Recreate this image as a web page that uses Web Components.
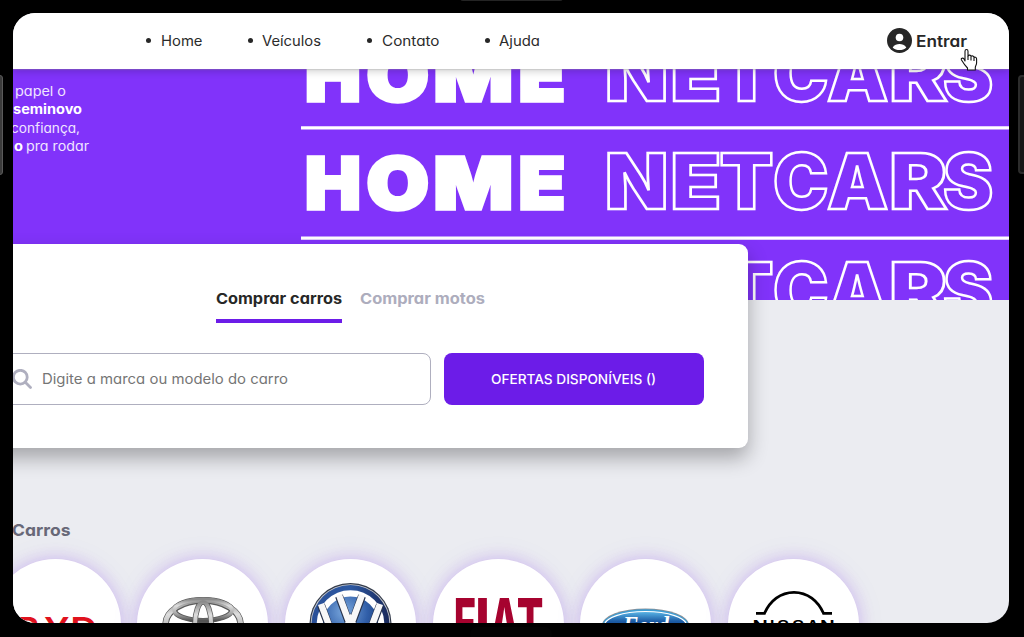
<!DOCTYPE html>
<html lang="pt-BR">
<head>
<meta charset="utf-8">
<title>Netcars</title>
<style>
html,body{margin:0;height:100%;background:#000;overflow:hidden}
body{font-family:Inter,"Open Sans",sans-serif;font-feature-settings:"cv11";color:#272727}
</style>
</head>
<body>
<device-frame>
  <net-header>
    <nav-item><fit-text w="41.5">Home</fit-text></nav-item><nav-item><fit-text w="59">Veículos</fit-text></nav-item><nav-item><fit-text w="57.5">Contato</fit-text></nav-item><nav-item><fit-text w="41">Ajuda</fit-text></nav-item>
    <login-link slot="login"><fit-text w="51">Entrar</fit-text></login-link>
  </net-header>
  <hero-banner></hero-banner>
  <search-card></search-card>
  <brand-list></brand-list>
  <hand-cursor slot="overlay"></hand-cursor>
</device-frame>
<script>
const define=(name,html,after)=>{
  const t=document.createElement('template');t.innerHTML=html;
  customElements.define(name,class extends HTMLElement{
    connectedCallback(){
      if(this.shadowRoot)return;
      this.attachShadow({mode:'open'}).append(t.content.cloneNode(true));
      if(after)after.call(this,this.shadowRoot);
    }
  });
};

/* Fills an svg <text> with letters, each stretched between two x positions. */
const ctx=document.createElement('canvas').getContext('2d');
function setLetters(el,weight,family){
  const size=+el.getAttribute('font-size');
  ctx.font=`${weight} ${size}px ${family}`;
  el.setAttribute('font-weight',weight);el.setAttribute('font-family',family);
  const word=el.dataset.word,spans=el.dataset.x.split(' ').map(p=>p.split(',').map(Number));
  [...word].forEach((c,i)=>{
    const m=ctx.measureText(c),ink=m.actualBoundingBoxRight+m.actualBoundingBoxLeft;
    const k=(spans[i][1]-spans[i][0])/ink;
    const t=document.createElementNS('http://www.w3.org/2000/svg','tspan');
    t.textContent=c;
    t.setAttribute('x',spans[i][0]+m.actualBoundingBoxLeft*k);
    t.setAttribute('textLength',m.width*k);
    t.setAttribute('lengthAdjust','spacingAndGlyphs');
    el.append(t);
  });
}

define('device-frame',`<style>
:host{display:block;box-sizing:border-box;width:1024px;height:637px;padding:13px 15px 15px 13px;background:#000;position:relative;overflow:hidden}
main{height:609.5px;border-radius:22px;overflow:hidden;background:#ebecf1;display:flex;flex-direction:column;isolation:isolate}
i{position:absolute;box-sizing:border-box}
.l{left:-4px;top:75px;width:7px;height:100px;border-radius:3px;background:#3b3b3b;border:1px solid #5a5a5a}
.r{left:1018px;top:75px;width:12px;height:99px;border-radius:4px;background:#161616;border:2px solid #2c2c2c}
.t{left:460px;top:-5px;width:103px;height:6px;border-radius:4px;background:#242424}
.b{left:470px;top:627px;width:82px;height:14px;border-radius:8px;background:#030303}
</style><i class="l"></i><i class="r"></i><i class="t"></i><i class="b"></i><main><slot></slot></main><slot name="overlay"></slot>`);

define('net-header',`<style>
:host{display:flex;align-items:center;justify-content:space-between;box-sizing:border-box;height:55.500px;flex:none;padding:0 42px 0 133.300px;background:#fff;box-shadow:0 1px 1px #9994,0 2px 8px #0003;position:relative;z-index:2}
nav{display:flex;gap:45.700px}
</style><nav><slot></slot></nav><slot name="login"></slot>`);

define('nav-item',`<style>
:host{display:flex;align-items:center;gap:9.500px;font-size:14px;line-height:20px;color:#2b2b2b}
i{width:5px;height:5px;border-radius:50%;background:#272727}
</style><i></i><slot></slot>`);

define('login-link',`<style>
:host{display:flex;align-items:center;gap:4.500px;font-size:16px;font-weight:600;line-height:24px;color:#272727}
svg{display:block;width:25px;height:25px;margin-top:-1px}
</style><svg viewBox="0 0 25 25"><circle cx="12.5" cy="12.5" r="12.5" fill="#272727"/><circle cx="12.5" cy="9.500" r="3.800" fill="#fff"/><path d="M5.700 19.400C7.300 17 10 16 12.500 16s5.200 1 6.800 3.400C17.600 21.200 15 22.100 12.500 22.100S7.400 21.200 5.700 19.400Z" fill="#fff"/></svg><slot></slot>`);

define('hero-banner',`<style>
:host{display:grid;grid-template-columns:288px 708px;height:231.800px;flex:none;background:#8133fa;overflow:hidden}
.copy{padding-top:13.500px;font-size:13px;line-height:18.400px;color:#f0e5ff}
p{margin:0;height:18.400px;white-space:pre}
b{font-weight:700;color:#fff}
svg{display:block;width:708px;height:232px}
</style>
<div class="copy"><p style="margin-left:1.500px"><fit-text w="51">papel o</fit-text></p><p style="margin-left:-.5px"><b><fit-text w="69">seminovo</fit-text></b></p><p style="margin-left:-2px"><fit-text w="69">confiança,</fit-text></p><p style="margin-left:.5px"><b><fit-text w="9">o</fit-text></b><fit-text w="3"> </fit-text><fit-text w="63">pra rodar</fit-text></p></div>
<svg viewBox="301 68.500 708 232">
<g fill="#fff" stroke="#fff" stroke-width="3.400">
<text class="h" y="100.200" font-size="71.500" data-word="HOME" data-x="308,358 368.700,426.200 437,509.200 521.700,562.300"></text>
<text class="h" y="208.800" font-size="71.500" data-word="HOME" data-x="308,358 368.700,426.200 437,509.200 521.700,562.300"></text>
</g>
<g fill="#8133fa" stroke="#fff" stroke-width="2.500">
<text class="n" y="100.200" font-size="77" data-word="NETCARS" data-x="608,665 673.500,718 721.500,771.500 775,827 828,887 892.500,947 945,992"></text>
<text class="n" y="208.700" font-size="77" data-word="NETCARS" data-x="608,665 673.500,718 721.500,771.500 775,827 828,887 892.500,947 945,992"></text>
<text class="n" y="317.100" font-size="77" data-word="NETCARS" data-x="608,665 673.500,718 721.500,771.500 775,827 828,887 892.500,947 945,992"></text>
</g>
<path d="M300.500 127.400H1010M300.500 237.700H1010" stroke="#fff" stroke-width="3.300"/>
</svg>`,r=>{
  r.querySelectorAll('.h').forEach(e=>setLetters(e,900,'Inter'));
  r.querySelectorAll('.n').forEach(e=>setLetters(e,900,'Inter'));
});

define('search-card',`<style>
:host{display:block;box-sizing:border-box;width:764.500px;height:204px;flex:none;margin:-56px 0 0 -30px;padding:42px 43px 0 0;background:#fff;border-radius:9px;box-shadow:0 10px 20px #0000004d;position:relative;z-index:1}
.tabs{display:flex;gap:18px;margin-left:233px;font-size:15px;font-weight:700;line-height:25px}
.tabs div{height:33px;color:#adadbd}
.tabs .on{color:#272727;border-bottom:4px solid #6c1ce8}
.row{display:flex;gap:13px;margin-top:29.700px}
.field{box-sizing:border-box;width:447.500px;height:52px;border:1.500px solid #afafbf;border-radius:8px;display:flex;align-items:center;padding-left:27.500px;font-size:14px;color:#757575;gap:10px}
svg{width:20px;height:20px;display:block}
.btn{width:260.500px;height:52px;border-radius:8px;background:#6c1ce8;color:#fff;font-size:13.500px;font-weight:500;display:flex;align-items:center;justify-content:center}
</style>
<div class="tabs"><div class="on"><fit-text w="126">Comprar carros</fit-text></div><div><fit-text w="125">Comprar motos</fit-text></div></div>
<div class="row"><div class="field"><svg viewBox="0 0 20 20" fill="none" stroke="#afafbf" stroke-width="2.800"><circle cx="8.300" cy="8.200" r="6.900"/><path d="m13.300 13.200 5.200 5.200" stroke-linecap="round"/></svg><fit-text w="246">Digite a marca ou modelo do carro</fit-text></div><div class="btn"><fit-text w="165">OFERTAS DISPONÍVEIS ()</fit-text></div></div>`);

define('brand-list',`<style>
:host{display:block;flex:none;padding-top:68.500px}
h2{margin:0 0 0 -1.500px;font-size:16.500px;line-height:26px;font-weight:700;color:#686878}
.row{display:flex;gap:16.700px;margin:16.500px 0 0 -23.500px}
</style><h2><fit-text w="58.500">Carros</fit-text></h2>
<div class="row">
<brand-badge><svg viewBox="0 0 131 131"><text y="81.500" font-size="33" fill="#e0121d" data-word="BYD" data-weight="600" data-x="27,49 54,79 82.500,106.500"></text></svg></brand-badge>
<brand-badge><svg viewBox="0 0 131 131">
<defs><linearGradient id="c" x2="0" y2="1"><stop stop-color="#8b8b8b"/><stop offset=".3" stop-color="#dedede"/><stop offset=".7" stop-color="#a2a2a2"/><stop offset="1" stop-color="#555"/></linearGradient></defs>
<g transform="translate(.6 1)"><g fill="none" stroke="#5b5b5b" stroke-width="6.500"><ellipse cx="65.500" cy="64.500" rx="37.500" ry="24"/><ellipse cx="65.500" cy="50" rx="28.500" ry="10.500" stroke-width="5.200"/><ellipse cx="65.500" cy="64" rx="8" ry="22" stroke-width="5.500"/></g>
<g fill="none" stroke="url(#c)" stroke-width="4.900"><ellipse cx="65.500" cy="64" rx="37.500" ry="24"/><ellipse cx="65.500" cy="50" rx="29" ry="10.500" stroke-width="3.600"/><ellipse cx="65.500" cy="64" rx="8" ry="22" stroke-width="4"/></g></g></svg></brand-badge>
<brand-badge><svg viewBox="0 0 131 131">
<defs><radialGradient id="v" cx=".4" cy=".3" r=".75"><stop stop-color="#7ba9de"/><stop offset=".5" stop-color="#315fa9"/><stop offset="1" stop-color="#102c63"/></radialGradient><linearGradient id="w"><stop stop-color="#294f97"/><stop offset=".5" stop-color="#2e59a2"/><stop offset="1" stop-color="#18285a"/></linearGradient></defs>
<circle cx="65.500" cy="65" r="41" fill="#333b4b"/><circle cx="65.500" cy="65" r="39.800" fill="#c7c9cd"/><circle cx="65.500" cy="65" r="38.900" fill="url(#w)"/>
<circle cx="65.500" cy="65" r="30.700" fill="url(#v)" stroke="#fff" stroke-width="6.200"/>
<path d="m54 37 11.500 31L77 37M36 46l15 40 14.500-24L80 86l15-40" fill="none" stroke="#27334d" stroke-width="8"/>
<path d="m54 36 11.500 31L77 36M36 45l15 40 14.500-24L80 85l15-40" fill="none" stroke="#f7f7f8" stroke-width="6.400"/></svg></brand-badge>
<brand-badge><svg viewBox="0 0 131 131"><text y="87" font-size="66" fill="#a6032f" data-word="FIAT" data-weight="800" data-x="22.500,42 44.500,54.500 57,86 85,109.500"></text></svg></brand-badge>
<brand-badge><svg viewBox="0 0 131 131">
<defs><linearGradient id="f" x2="0" y2="1"><stop stop-color="#5cb8e8"/><stop offset=".35" stop-color="#1c5ca5"/><stop offset="1" stop-color="#0b2c6a"/></linearGradient></defs>
<ellipse cx="65.500" cy="66" rx="43.500" ry="16.600" fill="#8c8f94"/><ellipse cx="65.500" cy="66.500" rx="43" ry="16.300" fill="#3f9ed4"/><ellipse cx="65.500" cy="66.500" rx="41" ry="14" fill="url(#f)" stroke="#fff" stroke-width="1.200"/>
<text x="43" y="75.500" font-size="27" font-family="Liberation Serif" font-style="italic" font-weight="700" fill="#fff" textLength="46" lengthAdjust="spacingAndGlyphs">Ford</text></svg></brand-badge>
<brand-badge><svg viewBox="0 0 131 131">
<path d="M28 54.300h8.500c5.500-12.500 16-21 29.500-21s24 8.500 29.500 21h8.500" fill="none" stroke="#000" stroke-width="2.800"/>
<text y="71.500" font-size="14" fill="#000" data-word="NISSAN" data-weight="600" data-x="26,39 43,45.500 49,61 64,76 78.500,91 93.500,106"></text></svg></brand-badge>
</div>`,r=>r.querySelectorAll('[data-word]').forEach(e=>setLetters(e,e.dataset.weight,'Inter')));

define('brand-badge',`<style>
:host{display:block;width:131px;height:131px;flex:none;border-radius:50%;background:#fff;box-shadow:0 0 16px #6c1ce838,0 0 32px #6c1ce810}
::slotted(svg){display:block;width:131px;height:131px}
</style><slot></slot>`);

define('hand-cursor',`<style>:host{position:absolute;left:960px;top:48px;width:18px;height:23px}svg{display:block}</style>
<svg width="18" height="23" viewBox="0 0 18 23"><path d="M5 13V3.200C5 1 8 1 8 3.200V8C9 6.500 11 7 11 8.500 12 7.200 14 8 14 9.500c1.200-.8 2.600 0 2.600 1.500v4c0 2-1.300 3-1.300 4.500V22H7.500v-2C5 17.500 3 14.500 1.500 12 .5 10 3 9.500 4 11Z" fill="#fff" stroke="#111" stroke-width="1.100" stroke-linejoin="round"/><path d="M8 8v4M11 9v3.500M14 10v3" stroke="#111" stroke-width="1.100" fill="none"/></svg>`);

/* One line of text, widened to the width given in "w". */
define('fit-text',`<style>:host{display:inline-block;white-space:pre}span{display:inline-block;transform-origin:0 50%}</style><span><slot></slot></span>`,function(r){
  const w=+this.getAttribute('w'),s=r.querySelector('span');
  const nat=s.getBoundingClientRect().width;
  this.style.width=w+'px';
  if(nat)s.style.transform=`scaleX(${w/nat})`;
});
</script>
</body>
</html>
